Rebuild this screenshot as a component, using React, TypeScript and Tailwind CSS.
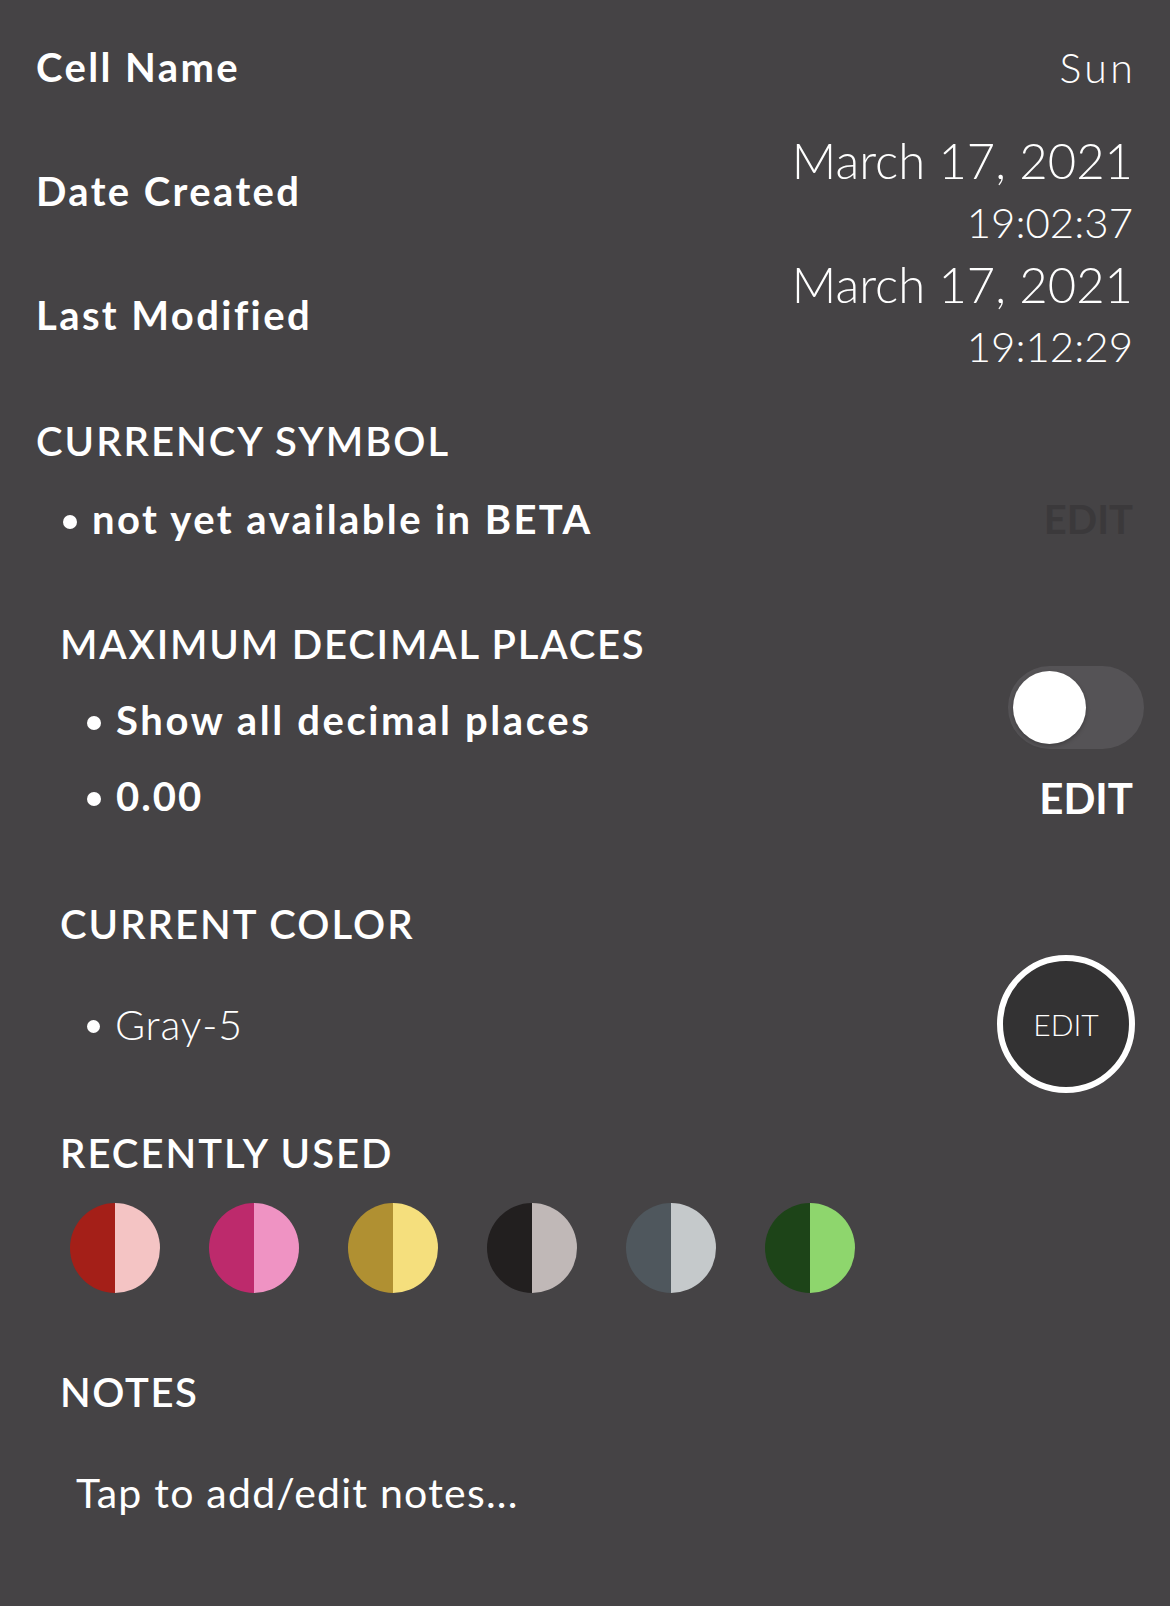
import { useState } from 'react'

const recent = [
  ['#a41f18', '#f4c4c4'],
  ['#bd2a6c', '#ef93c3'],
  ['#b09032', '#f5df7d'],
  ['#221f1f', '#c0b8b7'],
  ['#4f575d', '#c5c9cb'],
  ['#1d4418', '#8ed66d'],
]

function InfoRow({ label, children }: { label: string; children: React.ReactNode }) {
  return (
    <div className="flex h-[124px] items-center justify-between">
      <span className="text-[40px] font-bold leading-none tracking-[0.06em]">{label}</span>
      <div className="flex flex-col items-end font-light">{children}</div>
    </div>
  )
}

function Dot({ size = 14 }: { size?: number }) {
  return <span className={size === 14 ? 'mt-[6px] h-[14px] w-[14px] shrink-0 rounded-full bg-white' : 'mt-[4px] h-[13px] w-[13px] shrink-0 rounded-full bg-white'} />
}

export default function App() {
  const [showAll, setShowAll] = useState(false)

  return (
    <div className="min-h-screen bg-[#454345] pl-[36px] pr-[37px] pt-[5px] text-white [font-family:Lato,'Liberation_Sans',sans-serif]">
      <InfoRow label="Cell Name">
        <span className="-mr-[3px] text-[41px] leading-none tracking-[0.08em]">Sun</span>
      </InfoRow>
      <InfoRow label="Date Created">
        <span className="flex h-[62px] items-center text-[49px] leading-none">March 17, 2021</span>
        <span className="flex h-[62px] items-center text-[42px] leading-none">19:02:37</span>
      </InfoRow>
      <InfoRow label="Last Modified">
        <span className="flex h-[62px] items-center text-[49px] leading-none">March 17, 2021</span>
        <span className="flex h-[62px] items-center text-[42px] leading-none">19:12:29</span>
      </InfoRow>

      <h2 className="mt-[34px] flex h-[60px] items-center text-[40px] font-semibold leading-none tracking-[0.05em]">CURRENCY SYMBOL</h2>
      <div className="mt-[18px] flex h-[60px] items-center">
        <div className="ml-[27px] flex items-center gap-[15px]">
          <Dot />
          <span className="text-[40px] font-bold leading-none tracking-[0.06em]">not yet available in BETA</span>
        </div>
        <span className="ml-auto text-[40px] font-bold leading-none text-[#3b393b]">EDIT</span>
      </div>

      <div className="pl-[24px]">
        <h2 className="mt-[65px] flex h-[60px] items-center text-[40px] font-semibold leading-none tracking-[0.045em]">MAXIMUM DECIMAL PLACES</h2>
        <div className="mt-[16px] flex h-[60px] items-center">
          <div className="ml-[27px] flex items-center gap-[15px]">
            <Dot />
            <span className="text-[40px] font-bold leading-none tracking-[0.065em]">Show all decimal places</span>
          </div>
          <button
            onClick={() => setShowAll(!showAll)}
            className="-mr-[11px] -mt-[25px] ml-auto flex h-[83px] w-[136px] items-center rounded-full bg-[#555356] px-[5px]"
          >
            <span className="h-[73px] w-[73px] rounded-full bg-white shadow-[0_2px_4px_rgba(0,0,0,0.25)]" />
          </button>
        </div>
        <div className="mt-[16px] flex h-[60px] items-center">
          <div className="ml-[27px] flex items-center gap-[15px]">
            <Dot />
            <span className="text-[40px] font-bold leading-none tracking-[0.05em]">0.00</span>
          </div>
          <span className="ml-auto mt-[4px] text-[42px] font-bold leading-none">EDIT</span>
        </div>

        <h2 className="mt-[68px] flex h-[60px] items-center text-[40px] font-semibold leading-none tracking-[0.05em]">CURRENT COLOR</h2>
        <div className="flex h-[140px] items-center">
          <div className="ml-[27px] flex items-center gap-[15px]">
            <Dot size={13} />
            <span className="text-[41px] font-light leading-none tracking-[0.02em]">Gray-5</span>
          </div>
          <button className="-mr-[2px] ml-auto flex h-[138px] w-[138px] items-center justify-center rounded-full border-[6px] border-white bg-[#333233] text-[30px] font-light leading-none">
            EDIT
          </button>
        </div>

        <h2 className="mt-[29px] flex h-[60px] items-center text-[40px] font-semibold leading-none tracking-[0.05em]">RECENTLY USED</h2>
        <div className="ml-[10px] mt-[20px] flex gap-[49px]">
          {recent.map(([dark, light]) => (
            <div key={dark} className="flex h-[90px] w-[90px] overflow-hidden rounded-full">
              <div className="flex-1" style={{ backgroundColor: dark }} />
              <div className="flex-1" style={{ backgroundColor: light }} />
            </div>
          ))}
        </div>

        <h2 className="mt-[69px] flex h-[60px] items-center text-[40px] font-semibold leading-none tracking-[0.04em]">NOTES</h2>
        <p className="ml-[16px] mt-[40px] flex h-[60px] items-center text-[41px] leading-none tracking-[0.03em]">Tap to add/edit notes...</p>
      </div>
    </div>
  )
}
